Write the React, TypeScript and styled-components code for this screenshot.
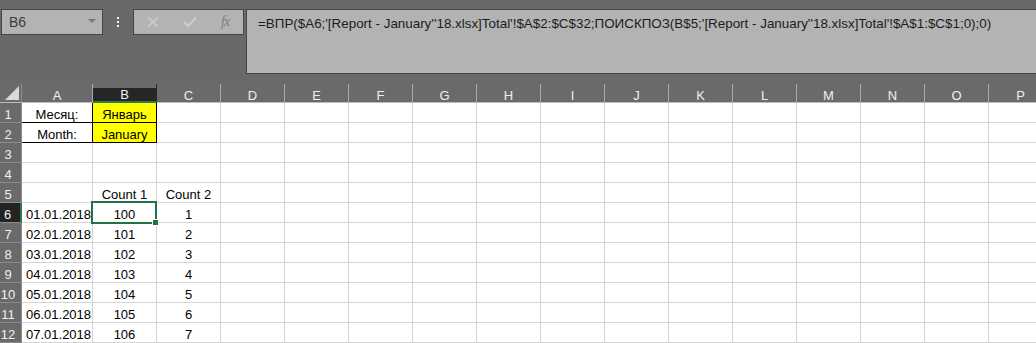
import React from "react";
import styled, { createGlobalStyle, css } from "styled-components";

const GlobalStyle = createGlobalStyle`
  html, body {
    margin: 0;
    padding: 0;
    background: #696969;
    overflow: hidden;
  }
  body {
    font-family: "Liberation Sans", Arial, sans-serif;
  }
`;

const ScPage = styled.div`
  width: 1036px;
  height: 343px;
  overflow: hidden;
  display: flex;
  flex-direction: column;
`;

const ScToolbar = styled.div`
  height: 85px;
  box-sizing: border-box;
  padding: 9px 0 0 1px;
  display: flex;
  align-items: flex-start;
`;

const ScBoxCss = css`
  box-sizing: border-box;
  background: #b3b3b3;
  border: 1px solid #454545;
`;

const ScNameBox = styled.div`
  ${ScBoxCss}
  width: 102px;
  height: 26px;
  display: flex;
  align-items: center;
  justify-content: space-between;
  padding: 0 6px 0 7px;
  font-size: 14px;
  color: #3c3c3c;
`;

const ScCaret = styled.span`
  width: 0;
  height: 0;
  border-left: 4px solid transparent;
  border-right: 4px solid transparent;
  border-top: 4px solid #7a7a7a;
  margin-top: -2px;
`;

const ScGrip = styled.div`
  width: 30px;
  height: 26px;
  display: flex;
  flex-direction: column;
  align-items: center;
  justify-content: center;
  gap: 2px;

  span {
    width: 2px;
    height: 2px;
    background: #f2f2f2;
  }
`;

const ScFxBox = styled.div`
  ${ScBoxCss}
  width: 111px;
  height: 26px;
  display: flex;
  align-items: center;
  padding: 0 0 0 13px;
  gap: 24px;
`;

const ScFx = styled.span`
  font-family: "Liberation Serif", "Times New Roman", serif;
  font-style: italic;
  font-size: 14px;
  color: #7c7c7c;
  letter-spacing: -1px;
  margin-left: 0;
`;

const ScFormula = styled.div`
  ${ScBoxCss}
  flex: 1;
  height: 65px;
  margin-left: 2px;
  margin-right: -4px;
  padding: 5px 0 0 11px;
  font-size: 13.4px;
  line-height: 18px;
  color: #1c1c1c;
  white-space: nowrap;
`;

const ScSheet = styled.div`
  display: flex;
  flex-direction: column;
  background: #ffffff;
`;

const ScRow = styled.div<{ $header?: boolean }>`
  display: flex;
  height: ${(p) => (p.$header ? "19px" : "20px")};
  flex-shrink: 0;
`;

const ScCorner = styled.div`
  width: 22px;
  flex-shrink: 0;
  box-sizing: border-box;
  background: #6a6a6a;
  border-bottom: 1px solid #bdbdbd;
  border-right: 1px solid #8c8c8c;
  position: relative;

  &::after {
    content: "";
    position: absolute;
    right: 2px;
    bottom: 2px;
    width: 0;
    height: 0;
    border-left: 14px solid transparent;
    border-bottom: 14px solid #d9d9d9;
  }
`;

const ScColHead = styled.div<{ $w: number; $active?: boolean }>`
  width: ${(p) => p.$w}px;
  flex-shrink: 0;
  box-sizing: border-box;
  display: flex;
  align-items: center;
  justify-content: center;
  font-size: 13px;
  color: #f0f0f0;
  padding-top: 4px;
  background: ${(p) => (p.$active ? "#262626" : "#6a6a6a")};
  border-right: 1px solid ${(p) => (p.$active ? "#262626" : "#a8a8a8")};
  border-bottom: ${(p) => (p.$active ? "2px solid #2a7a4b" : "1px solid #bdbdbd")};
  box-shadow: inset 0 4px 0 #6a6a6a;
`;

const ScRowHead = styled.div<{ $active?: boolean }>`
  width: 22px;
  flex-shrink: 0;
  box-sizing: border-box;
  display: flex;
  align-items: center;
  justify-content: center;
  padding: 3px 5px 0 0;
  font-size: 13px;
  color: #f0f0f0;
  background: ${(p) => (p.$active ? "#232323" : "#6a6a6a")};
  border-bottom: 1px solid #8c8c8c;
  border-right: ${(p) => (p.$active ? "2px solid #2a7a4b" : "1px solid #8c8c8c")};
`;

type Align = "left" | "center";

const ScCell = styled.div<{ $w: number; $align?: Align; $fill?: boolean; $boxed?: boolean }>`
  width: ${(p) => p.$w}px;
  flex-shrink: 0;
  box-sizing: border-box;
  position: relative;
  display: flex;
  align-items: center;
  justify-content: ${(p) => (p.$align === "left" ? "flex-start" : "center")};
  padding: 4px 0 0 ${(p) => (p.$align === "left" ? "4px" : "0")};
  font-size: 13px;
  color: #000000;
  white-space: nowrap;
  background: ${(p) => (p.$fill ? "#ffff00" : "#ffffff")};
  border-right: 1px solid ${(p) => (p.$boxed ? "#000000" : "#d4d4d4")};
  border-bottom: 1px solid ${(p) => (p.$boxed ? "#000000" : "#d4d4d4")};
`;

const ScActive = styled.div`
  position: absolute;
  left: -2px;
  top: -2px;
  right: -1px;
  bottom: -2px;
  border: 2px solid #217346;
  pointer-events: none;
  z-index: 2;

  &::after {
    content: "";
    position: absolute;
    right: -4px;
    bottom: -4px;
    width: 5px;
    height: 5px;
    background: #217346;
    border: 1px solid #ffffff;
  }
`;

const COLS = ["A", "B", "C", "D", "E", "F", "G", "H", "I", "J", "K", "L", "M", "N", "O", "P"];
const widthOf = (i: number) => (i === 0 ? 71 : 64);

type CellDef = { text?: string; align?: Align; fill?: boolean; boxed?: boolean; active?: boolean };

const rows: CellDef[][] = [
  [
    { text: "Месяц:", boxed: true },
    { text: "Январь", fill: true, boxed: true },
  ],
  [
    { text: "Month:", boxed: true },
    { text: "January", fill: true, boxed: true },
  ],
  [],
  [],
  [{}, { text: "Count 1" }, { text: "Count 2" }],
  ...[0, 1, 2, 3, 4, 5, 6].map((i) => [
    { text: `0${i + 1}.01.2018`, align: "left" as Align },
    { text: String(100 + i), active: i === 0 },
    { text: String(i + 1) },
  ]),
];

const formula =
  "=ВПР($A6;'[Report - January''18.xlsx]Total'!$A$2:$C$32;ПОИСКПОЗ(B$5;'[Report - January''18.xlsx]Total'!$A$1:$C$1;0);0)";

const CrossIcon = () => (
  <svg width="12" height="12" viewBox="0 0 12 12">
    <path d="M1 1 L11 11 M11 1 L1 11" stroke="#cbcbcb" strokeWidth="1.6" fill="none" />
  </svg>
);

const CheckIcon = () => (
  <svg width="14" height="12" viewBox="0 0 14 12">
    <path d="M1 6 L5 10 L13 1.5" stroke="#cbcbcb" strokeWidth="2.4" fill="none" />
  </svg>
);

const App = () => (
  <ScPage>
    <GlobalStyle />
    <ScToolbar>
      <ScNameBox>
        B6
        <ScCaret />
      </ScNameBox>
      <ScGrip>
        <span />
        <span />
        <span />
      </ScGrip>
      <ScFxBox>
        <CrossIcon />
        <CheckIcon />
        <ScFx>fx</ScFx>
      </ScFxBox>
      <ScFormula>{formula}</ScFormula>
    </ScToolbar>
    <ScSheet>
      <ScRow $header>
        <ScCorner />
        {COLS.map((c, i) => (
          <ScColHead key={c} $w={widthOf(i)} $active={c === "B"}>
            {c}
          </ScColHead>
        ))}
      </ScRow>
      {rows.map((cells, r) => (
        <ScRow key={r}>
          <ScRowHead $active={r === 5}>{r + 1}</ScRowHead>
          {COLS.map((c, i) => {
            const cell = cells[i] ?? {};
            return (
              <ScCell
                key={c}
                $w={widthOf(i)}
                $align={cell.align}
                $fill={cell.fill}
                $boxed={cell.boxed}
              >
                {cell.text}
                {cell.active && <ScActive />}
              </ScCell>
            );
          })}
        </ScRow>
      ))}
    </ScSheet>
  </ScPage>
);

export default App;
